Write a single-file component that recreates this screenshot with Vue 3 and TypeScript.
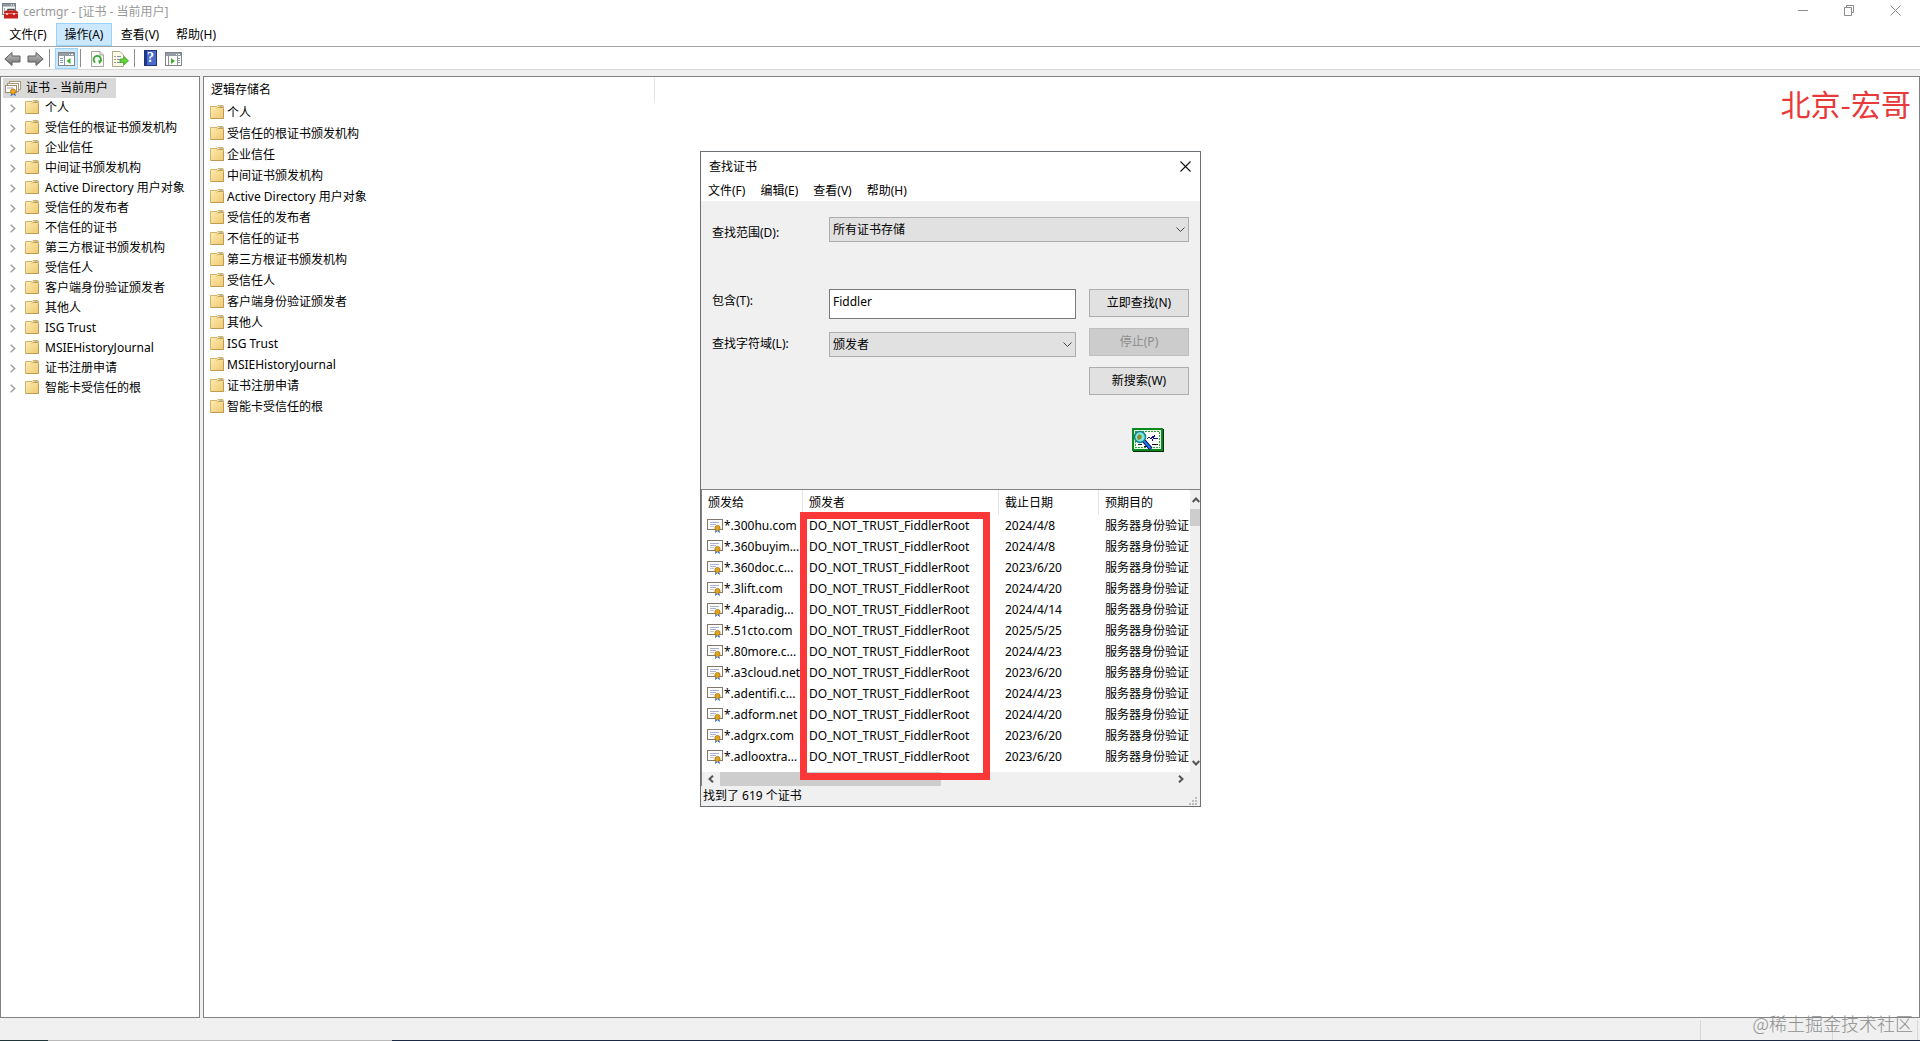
<script setup lang="ts">
import { ref } from 'vue'

interface Certificate {
  subject: string
  expires: string
}

const stores: string[] = [
  '个人',
  '受信任的根证书颁发机构',
  '企业信任',
  '中间证书颁发机构',
  'Active Directory 用户对象',
  '受信任的发布者',
  '不信任的证书',
  '第三方根证书颁发机构',
  '受信任人',
  '客户端身份验证颁发者',
  '其他人',
  'ISG Trust',
  'MSIEHistoryJournal',
  '证书注册申请',
  '智能卡受信任的根',
]

const menus: string[] = ['文件(F)', '操作(A)', '查看(V)', '帮助(H)']
const dialogMenus: string[] = ['文件(F)', '编辑(E)', '查看(V)', '帮助(H)']

const certificates: Certificate[] = [
  { subject: '*.300hu.com', expires: '2024/4/8' },
  { subject: '*.360buyim...', expires: '2024/4/8' },
  { subject: '*.360doc.c...', expires: '2023/6/20' },
  { subject: '*.3lift.com', expires: '2024/4/20' },
  { subject: '*.4paradig...', expires: '2024/4/14' },
  { subject: '*.51cto.com', expires: '2025/5/25' },
  { subject: '*.80more.c...', expires: '2024/4/23' },
  { subject: '*.a3cloud.net', expires: '2023/6/20' },
  { subject: '*.adentifi.c...', expires: '2024/4/23' },
  { subject: '*.adform.net', expires: '2024/4/20' },
  { subject: '*.adgrx.com', expires: '2023/6/20' },
  { subject: '*.adlooxtra...', expires: '2023/6/20' },
]

const keyword = ref('Fiddler')
</script>

<template>
  <div class="window">
    <!-- shared symbols -->
    <svg class="defs" aria-hidden="true">
      <defs>
        <linearGradient id="folder-fill" x1="0" y1="0" x2="1" y2="1">
          <stop offset="0" stop-color="#fdeeb5" />
          <stop offset="1" stop-color="#efc970" />
        </linearGradient>
        <linearGradient id="arrow-fill" x1="0" y1="0" x2="0" y2="1">
          <stop offset="0" stop-color="#c4c4c4" />
          <stop offset="1" stop-color="#6e6e6e" />
        </linearGradient>
        <symbol id="folder" viewBox="0 0 14 14">
          <path d="M.5 1.500H7L8 .5H13V1.500H13.500V13.500H.5Z" fill="url(#folder-fill)" stroke="#d3b269" />
          <path d="M7 3.500L8 2.500H13" fill="none" stroke="#c4a052" />
          <path d="M9.500 1.500H12.500" stroke="#9dbccb" />
          <path d="M1 13.500H13.500V4" fill="none" stroke="#bf9a52" />
        </symbol>
        <symbol id="cert" viewBox="0 0 16 14">
          <rect x=".5" y=".5" width="15" height="10" fill="#fdfdfb" stroke="#807868" />
          <path d="M3 3.5H12M3 5.5H9" stroke="#a9b0d6" />
          <path d="M3 7.5H7" stroke="#c9c9c9" />
          <path d="M8.5 10L8 14L10 12.5ZM12 10L13 14L10.5 12.5Z" fill="#2f6ac0" />
          <circle cx="10.5" cy="9" r="2.6" fill="#e2a51c" stroke="#a87410" stroke-width=".8" />
        </symbol>
      </defs>
    </svg>

    <header class="titlebar">
      <svg class="app-icon" width="16" height="16" viewBox="0 0 16 16">
        <rect x=".5" y=".5" width="13" height="11" fill="#f4f6f8" stroke="#7c8288" />
        <rect x="1" y="1" width="12" height="2.5" fill="#8e959c" />
        <path d="M9 2H10M11 2H12" stroke="#fff" />
        <path d="M2.5 5V10" stroke="#a3aab0" />
        <path d="M6 8V6.5H12V8" fill="none" stroke="#4c4c4c" stroke-width="1.4" />
        <path d="M2 9L4 7.5H14L16 9V15.5H2Z" fill="#c8201c" />
        <path d="M2 10.5H16" stroke="#f07a70" />
        <path d="M5 10V12M12 10V12" stroke="#ececec" stroke-width="1.5" />
      </svg>
      <h1 class="app-title">certmgr - [证书 - 当前用户]</h1>
      <div class="window-buttons">
        <button type="button" aria-label="最小化">
          <svg width="11" height="11" viewBox="0 0 11 11"><path d="M0 5.5H10" stroke="#8c8c8c" /></svg>
        </button>
        <button type="button" aria-label="还原">
          <svg width="11" height="11" viewBox="0 0 11 11" fill="none" stroke="#8c8c8c">
            <path d="M.5 2.5H7.5V10.5H.5ZM2.5 2V.5H9.5V7.5H8" />
          </svg>
        </button>
        <button type="button" aria-label="关闭">
          <svg width="11" height="11" viewBox="0 0 11 11"><path d="M.5 .5L10.5 10.5M10.5 .5L.5 10.5" stroke="#8c8c8c" /></svg>
        </button>
      </div>
    </header>

    <nav class="menubar">
      <button v-for="(menu, i) in menus" :key="menu" type="button" :class="{ active: i === 1 }">{{ menu }}</button>
    </nav>

    <div class="toolbar">
      <button type="button" aria-label="后退">
        <svg width="17" height="16" viewBox="0 0 17 16">
          <path d="M.8 8L8 1.5V5H16V11H8V14.5Z" fill="url(#arrow-fill)" stroke="#5f5f5f" />
        </svg>
      </button>
      <button type="button" aria-label="前进">
        <svg width="17" height="16" viewBox="0 0 17 16">
          <path d="M16.2 8L9 1.5V5H1V11H9V14.5Z" fill="url(#arrow-fill)" stroke="#5f5f5f" />
        </svg>
      </button>
      <span class="divider"></span>
      <button type="button" class="pressed" aria-label="显示控制台树">
        <svg width="17" height="14" viewBox="0 0 17 14">
          <rect x=".5" y=".5" width="16" height="13" fill="#fff" stroke="#7f858b" />
          <rect x="1" y="1" width="15" height="3" fill="#959ca3" />
          <path d="M11 2.5H12M13 2.5H15" stroke="#fff" />
          <path d="M6.5 4V13" stroke="#8b9197" />
          <path d="M2 6.5H5M2 8.5H5M2 10.5H5" stroke="#7aa0c8" />
          <path d="M12.5 6V12L8.5 9Z" fill="#3fae29" />
        </svg>
      </button>
      <span class="divider"></span>
      <button type="button" class="refresh" aria-label="刷新">
        <svg width="13" height="16" viewBox="0 0 13 16">
          <path d="M.5 .5H9L12.5 4V15.5H.5Z" fill="#fafafa" stroke="#a9a49a" />
          <path d="M9 .5V4H12.5" fill="#e6e2da" stroke="#a9a49a" />
          <path d="M4.2 11.6A3.7 3.7 0 1 1 8.8 11.2" fill="none" stroke="#3aa935" stroke-width="1.8" />
          <path d="M7 9.2L11 9.5L8.5 13.2Z" fill="#3aa935" />
        </svg>
      </button>
      <button type="button" aria-label="导出列表">
        <svg width="17" height="16" viewBox="0 0 17 16">
          <path d="M.5 .5H8L11.5 4V15.5H.5Z" fill="#fbf9ea" stroke="#b1a985" />
          <path d="M2.5 5.5H3.5M2.5 8.5H3.5M2.5 11.5H3.5" stroke="#444" />
          <path d="M5 5.5H9M5 8.5H8M5 11.5H9" stroke="#8a8ab0" />
          <path d="M8 8H12V5.5L16.5 9.8L12 14V11.5H8Z" fill="#67d23c" stroke="#3ca41f" stroke-width=".8" />
        </svg>
      </button>
      <span class="divider"></span>
      <button type="button" class="help" aria-label="帮助">?</button>
      <button type="button" aria-label="显示操作窗格">
        <svg width="17" height="14" viewBox="0 0 17 14">
          <rect x=".5" y=".5" width="16" height="13" fill="#fff" stroke="#7f858b" />
          <rect x="1" y="1" width="15" height="3" fill="#959ca3" />
          <path d="M11 2.5H12M13 2.5H15" stroke="#fff" />
          <path d="M3.500 4V13M12.500 4V13" stroke="#8b9197" />
          <path d="M13 6.5H15M13 8.5H15M13 10.5H15" stroke="#8b9197" />
          <path d="M6 6V12L10 9Z" fill="#3fae29" />
        </svg>
      </button>
    </div>

    <main class="panes">
      <aside class="tree">
        <div class="root">
          <svg width="16" height="16" viewBox="0 0 16 16">
            <rect x="4.500" y="1.500" width="11" height="8" fill="#fff" stroke="#a89878" />
            <rect x="2.500" y="3.500" width="11" height="8" fill="#fff" stroke="#a89878" />
            <rect x=".5" y="5.500" width="11" height="7" fill="#fff" stroke="#a08c68" />
            <path d="M2 8H8" stroke="#9aa2cc" />
            <path d="M6.500 12L5.500 16L8 15ZM9.500 12L11 16L8.500 15Z" fill="#2f6ac0" />
            <circle cx="8" cy="11.500" r="2.600" fill="#f0a818" stroke="#a87410" stroke-width=".8" />
          </svg>
          <span>证书 - 当前用户</span>
        </div>
        <ul>
          <li v-for="store in stores" :key="store">
            <svg class="twisty" width="6" height="9" viewBox="0 0 6 9"><path d="M.7 .7L4.700 4.500L.7 8.300" fill="none" stroke="#a0a0a0" stroke-width="1.500" /></svg>
            <svg class="folder" width="14" height="14"><use href="#folder" /></svg>
            <span>{{ store }}</span>
          </li>
        </ul>
      </aside>

      <section class="list">
        <div class="list-head">逻辑存储名</div>
        <ul>
          <li v-for="store in stores" :key="store">
            <svg class="folder" width="14" height="14"><use href="#folder" /></svg>
            <span>{{ store }}</span>
          </li>
        </ul>
        <p class="author">北京-宏哥</p>
      </section>
    </main>

    <footer class="statusbar">
      <span class="cell wide"></span>
      <span class="cell"></span>
      <span class="cell"></span>
      <p class="watermark">@稀土掘金技术社区</p>
    </footer>

    <div class="dialog" role="dialog" aria-labelledby="find-title">
      <div class="dialog-title">
        <h2 id="find-title">查找证书</h2>
        <button type="button" aria-label="关闭">
          <svg width="11" height="11" viewBox="0 0 11 11"><path d="M.5 .5L10.500 10.500M10.500 .5L.5 10.500" stroke="#111" stroke-width="1.100" /></svg>
        </button>
      </div>
      <nav class="dialog-menu">
        <button v-for="menu in dialogMenus" :key="menu" type="button">{{ menu }}</button>
      </nav>

      <form class="find" @submit.prevent>
        <div class="field scope">
          <label for="scope">查找范围(D):</label>
          <div class="select">
            <select id="scope"><option>所有证书存储</option></select>
            <svg width="9" height="6" viewBox="0 0 9 6"><path d="M.5 .5L4.500 4.500L8.500 .5" fill="none" stroke="#444" /></svg>
          </div>
        </div>
        <div class="criteria">
          <div class="fields">
            <div class="field">
              <label for="contains">包含(T):</label>
              <input id="contains" v-model="keyword" type="text" />
            </div>
            <div class="field">
              <label for="search-field">查找字符域(L):</label>
              <div class="select">
                <select id="search-field"><option>颁发者</option></select>
                <svg width="9" height="6" viewBox="0 0 9 6"><path d="M.5 .5L4.500 4.500L8.500 .5" fill="none" stroke="#444" /></svg>
              </div>
            </div>
          </div>
          <div class="actions">
            <button type="submit">立即查找(N)</button>
            <button type="button" disabled>停止(P)</button>
            <button type="button">新搜索(W)</button>
          </div>
        </div>
        <svg class="find-icon" width="32" height="24" viewBox="0 0 32 24" shape-rendering="crispEdges">
          <rect x="1" y="1" width="31" height="23" fill="#0a2a0a" />
          <rect width="31" height="23" fill="#0a8a1e" />
          <rect x="2" y="2" width="27" height="19" fill="#e6f7e6" />
          <rect x="3.500" y="3.500" width="24" height="16" fill="#fff" stroke="#2fa03a" stroke-dasharray="2 1" />
          <path d="M6 16H10M20 16H26M12 18H15" stroke="#111" />
          <path d="M15 11L17 9L19 11L21 8L22 10L26 10M20 13L23 7" fill="none" stroke="#15158c" />
          <g shape-rendering="auto">
            <path d="M12 13L19 21" stroke="#000060" stroke-width="4" />
            <path d="M12 13L18.500 20.500" stroke="#1c7df0" stroke-width="2" />
            <circle cx="8" cy="9" r="5.500" fill="#7fe6dc" stroke="#12808a" stroke-width="1.500" />
            <path d="M7 6L10 8L9 11L6 12L5 9Z" fill="#8a8a28" />
          </g>
        </svg>
      </form>

      <div class="results">
        <div class="grid">
          <table>
            <colgroup>
              <col class="c-subject" />
              <col class="c-issuer" />
              <col class="c-date" />
              <col />
            </colgroup>
            <thead>
              <tr>
                <th scope="col">颁发给</th>
                <th scope="col">颁发者</th>
                <th scope="col">截止日期</th>
                <th scope="col">预期目的</th>
              </tr>
            </thead>
            <tbody>
              <tr v-for="cert in certificates" :key="cert.subject">
                <td>
                  <div class="subject">
                    <svg width="16" height="14"><use href="#cert" /></svg>
                    <span>{{ cert.subject }}</span>
                  </div>
                </td>
                <td>DO_NOT_TRUST_FiddlerRoot</td>
                <td>{{ cert.expires }}</td>
                <td>服务器身份验证</td>
              </tr>
            </tbody>
          </table>
          <div class="vscroll">
            <svg width="8" height="6" viewBox="0 0 8 6"><path d="M.7 5L4 1.500L7.300 5" fill="none" stroke="#555" stroke-width="2" /></svg>
            <span class="thumb"></span>
            <svg class="down" width="8" height="6" viewBox="0 0 8 6"><path d="M.7 1L4 4.500L7.300 1" fill="none" stroke="#555" stroke-width="2" /></svg>
          </div>
        </div>
        <div class="hscroll">
          <svg width="6" height="8" viewBox="0 0 6 8"><path d="M5 .7L1.500 4L5 7.300" fill="none" stroke="#555" stroke-width="2" /></svg>
          <span class="thumb"></span>
          <svg class="right" width="6" height="8" viewBox="0 0 6 8"><path d="M1 .7L4.500 4L1 7.300" fill="none" stroke="#555" stroke-width="2" /></svg>
        </div>
      </div>

      <div class="dialog-status">
        <span>找到了 619 个证书</span>
        <svg width="9" height="9" viewBox="0 0 9 9" fill="#bdbdbd">
          <path d="M6 0H8V2H6ZM6 3H8V5H6ZM3 3H5V5H3ZM0 6H2V8H0ZM3 6H5V8H3ZM6 6H8V8H6Z" />
        </svg>
      </div>

      <div class="highlight"></div>
    </div>
  </div>
</template>

<style>
body {
  margin: 0;
}
</style>

<style scoped>
.window {
  position: relative;
  display: flex;
  flex-direction: column;
  min-height: 100vh;
  background: #fff;
  color: #000;
  font-family: 'Noto Sans', 'Noto Sans CJK SC', sans-serif;
  font-size: 12px;
  line-height: 20px;
  white-space: nowrap;
}

.window * {
  box-sizing: border-box;
}

.defs {
  position: absolute;
  width: 0;
  height: 0;
}

svg {
  display: block;
  flex: none;
}

button,
select,
input {
  margin: 0;
  padding: 0;
  border: 0;
  background: none;
  color: inherit;
  font: inherit;
}

h1,
h2,
p,
ul {
  margin: 0;
  padding: 0;
  list-style: none;
  font-size: 12px;
  font-weight: 400;
}

/* title bar */
.titlebar {
  display: flex;
  height: 23px;
  padding: 0 2px;
}

.app-icon {
  margin-top: 3px;
}

.app-title {
  flex: 1;
  padding-left: 5px;
  color: #999;
  line-height: 24px;
}

.window-buttons {
  display: flex;
}

.window-buttons button {
  display: flex;
  justify-content: center;
  width: 46px;
  padding-top: 5px;
}

/* menu bar */
.menubar {
  display: flex;
  height: 24px;
  border-bottom: 1px solid #a5a5a5;
}

.menubar button {
  width: 56px;
  height: 23px;
  padding-top: 1px;
  border: 1px solid transparent;
  text-align: center;
}

.menubar button.active {
  border-color: #99d1ff;
  background: #cce8ff;
}

/* toolbar */
.toolbar {
  display: flex;
  align-items: flex-end;
  height: 23px;
  padding-left: 4px;
  border-bottom: 1px solid #d9d9d9;
}

.toolbar button {
  display: flex;
  align-items: center;
  justify-content: center;
  width: 23px;
  height: 21px;
}

.toolbar button:first-child {
  width: 17px;
  margin-right: 3px;
}

.toolbar .divider {
  width: 1px;
  height: 18px;
  margin: 0 5px 2px 2px;
  background: #8c8c8c;
}

.toolbar .pressed {
  border: 1px solid #99d1ff;
  background: #cce8ff;
}

.toolbar .help {
  width: 13px;
  height: 16px;
  margin: 0 5px 3px 4px;
  border: 1px solid #1f3478;
  background: linear-gradient(90deg, #22388a 2px, #4a6ccc 2px);
  color: #fff;
  font-family: 'Liberation Serif', serif;
  font-size: 14px;
  font-weight: 700;
  line-height: 14px;
}

/* panes */
.panes {
  display: flex;
  flex: 1;
  gap: 3px;
  padding-top: 6px;
  background: #f0f0f0;
}

.tree {
  width: 200px;
  padding-top: 1px;
  border: 1px solid #828282;
  background: #fff;
}

.tree .root {
  display: flex;
  align-items: center;
  gap: 5px;
  width: 113px;
  margin-left: 2px;
  padding-left: 2px;
  background: #d9d9d9;
}

.tree li {
  display: flex;
  align-items: center;
  height: 20px;
  padding-left: 9px;
}

.tree li .folder {
  margin: 0 6px 2px 9px;
}

.list {
  position: relative;
  flex: 1;
  padding-top: 1px;
  border: 1px solid #828282;
  background: #fff;
}

.list-head {
  width: 451px;
  height: 24px;
  padding-left: 7px;
  border-right: 1px solid #e5e5e5;
  line-height: 24px;
}

.list li {
  display: flex;
  align-items: center;
  gap: 3px;
  height: 21px;
  padding-left: 6px;
}

.list li .folder {
  margin-bottom: 2px;
}

.author {
  position: absolute;
  top: 6px;
  right: 8px;
  color: #e83a3a;
  font-family: 'Noto Sans CJK SC', sans-serif;
  font-size: 30px;
  line-height: 40px;
}

/* status bar */
.statusbar {
  position: relative;
  display: flex;
  justify-content: flex-end;
  height: 23px;
  padding: 2px 2px 1px 0;
  background:
    linear-gradient(90deg, #1f3538 48px, #b9b9b9 48px, #b9b9b9 392px, #1b2942 392px) bottom / 100% 1px no-repeat,
    #f0f0f0;
}

.statusbar .cell {
  width: 85px;
  border-left: 1px solid #d7d7d7;
}

.statusbar .cell:last-of-type {
  width: 1px;
}

.statusbar .wide {
  width: 132px;
}

.watermark {
  position: absolute;
  right: 7px;
  bottom: 6px;
  color: #8f8f8f;
  font-family: 'Noto Sans CJK SC', sans-serif;
  font-size: 18px;
  font-weight: 300;
  line-height: 24px;
}

/* find dialog */
.dialog {
  position: absolute;
  top: 151px;
  left: 700px;
  width: 501px;
  border: 1px solid #6a6f73;
  background: #f0f0f0;
}

.dialog-title {
  display: flex;
  align-items: center;
  justify-content: space-between;
  height: 29px;
  padding: 0 9px 0 8px;
  background: #fff;
}

.dialog-menu {
  display: flex;
  height: 20px;
  padding-left: 7px;
  gap: 15px;
  background: #fff;
}

.find {
  display: flex;
  flex-direction: column;
  height: 288px;
  padding: 16px 11px 0;
}

.field {
  display: grid;
  grid-template-columns: 117px 1fr;
  align-items: start;
}

.field label {
  line-height: 24px;
}

.scope {
  height: 25px;
  margin-bottom: 47px;
}

.scope label {
  padding-top: 4px;
}

.criteria {
  display: flex;
  gap: 13px;
}

.fields {
  display: flex;
  flex: 1;
  flex-direction: column;
  gap: 13px;
}

.field input {
  width: 100%;
  height: 30px;
  padding: 0 3px 6px;
  border: 1px solid #7a7a7a;
  background: #fff;
}

.select {
  display: grid;
  align-items: center;
}

.select > * {
  grid-area: 1 / 1;
}

.select select {
  width: 100%;
  height: 25px;
  padding: 0 3px;
  border: 1px solid #adadad;
  border-radius: 0;
  background: #e1e1e1;
  appearance: none;
}

.select svg {
  justify-self: end;
  margin-right: 4px;
  pointer-events: none;
}

.actions {
  display: flex;
  flex-direction: column;
  gap: 11px;
}

.actions button {
  width: 100px;
  height: 28px;
  border: 1px solid #adadad;
  background: #e1e1e1;
}

.actions button:disabled {
  border-color: #bfbfbf;
  background: #ccc;
  color: #8d8d8d;
}

.find-icon {
  align-self: flex-end;
  margin: 33px 25px 0 0;
}

/* results */
.results {
  border-top: 1px solid #828282;
  border-left: 1px solid #828282;
}

.grid {
  display: flex;
  height: 282px;
  background: #fff;
}

.grid table {
  flex: 1;
  align-self: flex-start;
  width: 488px;
  table-layout: fixed;
  border-collapse: separate;
  border-spacing: 0;
}

.c-subject {
  width: 101px;
}

.c-issuer {
  width: 196px;
}

.c-date {
  width: 100px;
}

th {
  height: 25px;
  padding: 0 0 0 6px;
  border-right: 1px solid #e5e5e5;
  font-weight: 400;
  text-align: left;
}

th:last-child {
  border-right: 0;
}

td {
  height: 21px;
  padding: 0 0 0 6px;
}

td:first-child {
  padding-left: 5px;
}

.subject {
  display: flex;
  align-items: center;
  gap: 1px;
}

.vscroll {
  display: flex;
  flex-direction: column;
  width: 10px;
  padding: 7px 0 6px;
  overflow: hidden;
  background: #f0f0f0;
}

.vscroll svg {
  margin-left: 2px;
}

.vscroll .thumb {
  height: 17px;
  margin-top: 6px;
  background: #cdcdcd;
}

.vscroll .down {
  margin-top: auto;
}

.hscroll {
  display: flex;
  align-items: center;
  height: 14px;
  padding: 0 16px 0 6px;
}

.hscroll .thumb {
  width: 221px;
  height: 14px;
  margin-left: 6px;
  background: #cdcdcd;
}

.hscroll .right {
  margin-left: auto;
}

.dialog-status {
  display: flex;
  align-items: flex-end;
  justify-content: space-between;
  height: 20px;
  padding: 0 2px;
}

.highlight {
  position: absolute;
  top: 360px;
  left: 99px;
  width: 190px;
  height: 268px;
  border: 7px solid #fb3737;
  pointer-events: none;
}
</style>
